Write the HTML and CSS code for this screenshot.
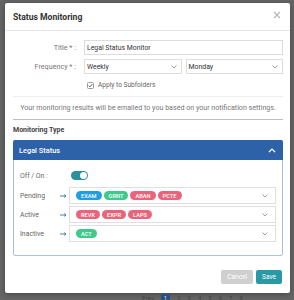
FILE: index.html
```html
<!DOCTYPE html>
<html lang="en">
<head>
    <meta charset="UTF-8">
    <meta name="viewport" content="width=device-width, initial-scale=1.0">
    <title>Status Monitoring</title>
    <link rel="stylesheet" href="styles.css">
</head>
<body>
    <div class="modal">
        <header class="modal-header">
            <h1>Status Monitoring</h1>
            <span class="close">
                <svg width="8" height="8" viewBox="0 0 8 8"><path d="M1 1L7 7M7 1L1 7" stroke="#b5b5b5" stroke-width="1.1"/></svg>
            </span>
        </header>

        <div class="modal-body">
            <form class="form" onsubmit="return false;">
                <label class="form-label">Title * :</label>
                <div class="field">Legal Status Monitor</div>

                <label class="form-label">Frequency * :</label>
                <div class="field-pair">
                    <div class="field select">Weekly
                        <svg class="caret" width="6" height="4" viewBox="0 0 6 4"><path d="M0.5 0.5L3 3L5.5 0.5" fill="none" stroke="#888" stroke-width="0.8"/></svg>
                    </div>
                    <div class="field select">Monday
                        <svg class="caret" width="6" height="4" viewBox="0 0 6 4"><path d="M0.5 0.5L3 3L5.5 0.5" fill="none" stroke="#888" stroke-width="0.8"/></svg>
                    </div>
                </div>

                <span></span>
                <div class="check">
                    <svg width="7" height="7" viewBox="0 0 7 7"><rect x="0.5" y="0.5" width="6" height="6" rx="1" fill="#fff" stroke="#9a9a9a"/><path d="M1.6 3.6L2.9 4.9L5.4 2" fill="none" stroke="#555" stroke-width="0.9"/></svg>
                    Apply to Subfolders
                </div>
            </form>

            <p class="note">Your monitoring results will be emailed to you based on your notification settings.</p>

            <h2 class="section-title">Monitoring Type</h2>

            <div class="panel">
                <div class="panel-header">
                    <span>Legal Status</span>
                    <svg width="8" height="5" viewBox="0 0 8 5"><path d="M1 4L4 1L7 4" fill="none" stroke="#fff" stroke-width="1.2"/></svg>
                </div>
                <div class="panel-body">
                    <div class="row toggle-row">
                        <span class="row-label">Off / On :</span>
                        <span class="toggle"><span class="knob"></span></span>
                    </div>

                    <div class="row">
                        <span class="row-label">Pending</span>
                        <svg class="arrow" width="7" height="4" viewBox="0 0 7 4"><path d="M0 2H5.5M4.2 0.6L6 2L4.2 3.4" fill="none" stroke="#3b6db3" stroke-width="0.9"/></svg>
                        <div class="tags">
                            <span class="tag blue">EXAM</span>
                            <span class="tag green">GRNT</span>
                            <span class="tag red">ABAN</span>
                            <span class="tag red">PCTE</span>
                            <svg class="caret" width="6" height="4" viewBox="0 0 6 4"><path d="M0.5 0.5L3 3L5.5 0.5" fill="none" stroke="#888" stroke-width="0.8"/></svg>
                        </div>
                    </div>

                    <div class="row">
                        <span class="row-label">Active</span>
                        <svg class="arrow" width="7" height="4" viewBox="0 0 7 4"><path d="M0 2H5.5M4.2 0.6L6 2L4.2 3.4" fill="none" stroke="#3b6db3" stroke-width="0.9"/></svg>
                        <div class="tags">
                            <span class="tag red">REVK</span>
                            <span class="tag red">EXPR</span>
                            <span class="tag red">LAPS</span>
                            <svg class="caret" width="6" height="4" viewBox="0 0 6 4"><path d="M0.5 0.5L3 3L5.5 0.5" fill="none" stroke="#888" stroke-width="0.8"/></svg>
                        </div>
                    </div>

                    <div class="row">
                        <span class="row-label">Inactive</span>
                        <svg class="arrow" width="7" height="4" viewBox="0 0 7 4"><path d="M0 2H5.5M4.2 0.6L6 2L4.2 3.4" fill="none" stroke="#3b6db3" stroke-width="0.9"/></svg>
                        <div class="tags">
                            <span class="tag green">ACT</span>
                            <svg class="caret" width="6" height="4" viewBox="0 0 6 4"><path d="M0.5 0.5L3 3L5.5 0.5" fill="none" stroke="#888" stroke-width="0.8"/></svg>
                        </div>
                    </div>
                </div>
            </div>
        </div>

        <footer class="modal-footer">
            <button class="btn btn-cancel">Cancel</button>
            <button class="btn btn-save">Save</button>
        </footer>
    </div>

    <div class="pager">
        <span>Prev</span>
        <span class="current">1</span>
        <span>2</span>
        <span>3</span>
        <span>4</span>
        <span>5</span>
        <span>6</span>
        <span>7</span>
        <span>8</span>
    </div>
</body>
</html>
```

FILE: styles.css
```css
body {
    margin: 0;
    font-family: Roboto, "Liberation Sans", Arial, sans-serif;
    background-color: #666;
    overflow: hidden;
}

.modal {
    width: 285px;
    height: 290px;
    margin: 3px 0 0 5px;
    background: #fff;
    border-radius: 2px;
    box-shadow: 0 1px 6px rgba(0, 0, 0, 0.35);
    display: flex;
    flex-direction: column;
}

.modal-header {
    height: 27px;
    padding: 0 9px 0 8px;
    border-bottom: 1px solid #e8e8e8;
    display: flex;
    align-items: center;
    justify-content: space-between;
}

.modal-header h1 {
    margin: 0;
    font-size: 8.6px;
    font-weight: 700;
    color: #333;
}

.close {
    display: flex;
    margin-top: -4px;
}

.modal-body {
    padding: 9px 7px 0 8px;
    flex: 1;
}

.form {
    display: grid;
    grid-template-columns: 63px 1fr;
    column-gap: 8px;
    row-gap: 4px;
    align-items: center;
}

.form-label {
    text-align: right;
    font-size: 7.2px;
    color: #777;
}

.field {
    height: 15px;
    border: 1px solid #dcdcdc;
    box-sizing: border-box;
    padding: 0 4px 0 2px;
    font-size: 6.9px;
    color: #333;
    display: flex;
    align-items: center;
}

.field-pair {
    display: flex;
    gap: 4px;
}

.select {
    flex: 1;
    justify-content: space-between;
}

.check {
    display: flex;
    align-items: center;
    gap: 4px;
    padding-left: 3px;
    height: 12px;
    font-size: 6.6px;
    color: #666;
    margin-top: 1px;
}

.note {
    margin: 5px 0 0;
    padding: 6px 0 7px;
    border-top: 1px solid #eee;
    border-bottom: 1px solid #bdbdbd;
    text-align: center;
    font-size: 7.1px;
    color: #777;
}

.section-title {
    margin: 6px 0 6px;
    font-size: 7px;
    font-weight: 700;
    color: #444;
}

.panel {
    border: 1px solid #a9c0df;
    border-radius: 2px;
}

.panel-header {
    height: 20px;
    margin: -1px -1px 0;
    padding: 0 7px 0 6px;
    background-color: #2e62a8;
    border-radius: 2px 2px 0 0;
    display: flex;
    align-items: center;
    justify-content: space-between;
    font-size: 7.4px;
    font-weight: 500;
    color: #fff;
}

.panel-body {
    padding: 7px 6px 13px 6px;
    display: flex;
    flex-direction: column;
    gap: 2px;
}

.row {
    display: flex;
    align-items: center;
}

.row-label {
    width: 40px;
    font-size: 6.9px;
    color: #666;
}

.toggle-row {
    height: 17px;
    margin-bottom: 1px;
}

.toggle {
    width: 17px;
    height: 9px;
    margin-left: 11px;
    border-radius: 5px;
    background-color: #29909c;
    display: flex;
    align-items: center;
    justify-content: flex-end;
    padding: 0 1px;
    box-sizing: border-box;
}

.knob {
    width: 7px;
    height: 7px;
    border-radius: 50%;
    background: #fff;
}

.arrow {
    margin-right: 2px;
}

.tags {
    flex: 1;
    height: 17px;
    border: 1px solid #e0e0e0;
    box-sizing: border-box;
    padding: 0 7px 0 6px;
    display: flex;
    align-items: center;
    gap: 2px;
}

.tags .caret {
    margin-left: auto;
}

.tag {
    height: 9px;
    padding: 0 5px;
    border-radius: 5px;
    font-size: 5.7px;
    font-weight: 500;
    color: #fff;
    display: flex;
    align-items: center;
}

.blue {
    background-color: #1f9ee0;
}

.green {
    background-color: #3fca8c;
}

.red {
    background-color: #e8647a;
}

.modal-footer {
    padding: 0 8px 9px;
    display: flex;
    justify-content: flex-end;
    gap: 3px;
}

.btn {
    height: 14px;
    padding: 0 6px;
    border: none;
    border-radius: 2px;
    font-family: inherit;
    font-size: 6.5px;
    color: #fff;
    cursor: pointer;
}

.btn-cancel {
    background-color: #cfcfcf;
}

.btn-save {
    background-color: #2a99a6;
}

.pager {
    display: flex;
    gap: 7px;
    margin: 1px 0 0 142px;
    font-size: 6px;
    color: #444;
}

.pager .current {
    background: #2b4f80;
    color: #ddd;
    padding: 0 3px;
}
```
